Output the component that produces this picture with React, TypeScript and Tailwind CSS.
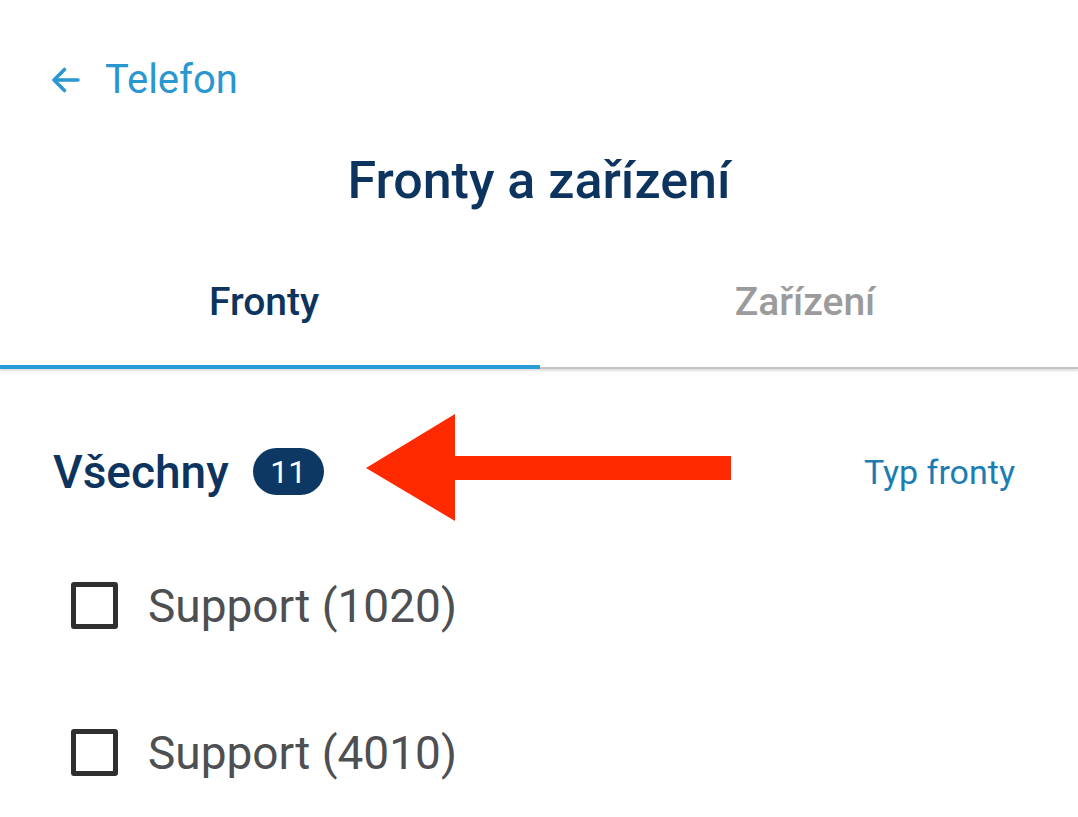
import React from "react";

function Checkbox() {
  return <div className="w-[47px] h-[47px] border-[5px] border-[#2f2f2f] rounded-[3px] shrink-0" />;
}

export default function App() {
  return (
    <div className="w-[1078px] h-[817px] bg-white overflow-hidden relative" style={{ fontFamily: "Roboto, 'Noto Sans', sans-serif" }}>
      {/* back link */}
      <div className="flex items-center h-[60px] mt-[50px] pl-[48px] text-[#2a97d0]">
        <svg width="36" height="36" viewBox="0 0 24 24" fill="none" stroke="currentColor" strokeWidth="2.4" strokeLinecap="round" strokeLinejoin="round">
          <path d="M20 12H4.5" />
          <path d="M11 5l-7 7 7 7" />
        </svg>
        <span className="ml-[21px] text-[40px] leading-none">Telefon</span>
      </div>

      {/* title */}
      <div className="flex justify-center mt-[45px]">
        <h1 className="text-[52px] font-medium text-[#0c345f] leading-none">Fronty a zařízení</h1>
      </div>

      {/* tabs */}
      <div className="mt-[72px] flex shadow-[0_2px_2px_rgba(0,0,0,0.13)]">
        <div className="w-[540px] h-[90px] flex items-start justify-center pt-[4px] border-b-[4px] border-[#2b9bd7]">
          <span className="text-[39px] font-medium text-[#0c345f] leading-none mr-[12px]">Fronty</span>
        </div>
        <div className="flex-1 h-[90px] flex items-start justify-center pt-[4px] border-b-[2px] border-[#c4c4c4]">
          <span className="text-[39px] font-medium text-[#9b9b9b] leading-none mr-[8px]">Zařízení</span>
        </div>
      </div>

      {/* header row */}
      <div className="flex items-center justify-between pl-[53px] pr-[63px] mt-[79px]">
        <div className="flex items-center">
          <span className="text-[46px] font-medium text-[#0c345f] leading-none">Všechny</span>
          <span className="ml-[24px] h-[47px] w-[71px] rounded-full bg-[#0c3863] text-white text-[32px] flex items-center justify-center leading-none">11</span>
        </div>
        <span className="text-[34px] text-[#1b7db3] leading-none">Typ fronty</span>
      </div>

      {/* list */}
      <div className="flex flex-col pl-[71px] mt-[87px] gap-[100px]">
        <div className="flex items-center gap-[30px]">
          <Checkbox />
          <span className="text-[46px] text-[#4d4f52] leading-none">Support (1020)</span>
        </div>
        <div className="flex items-center gap-[30px]">
          <Checkbox />
          <span className="text-[46px] text-[#4d4f52] leading-none">Support (4010)</span>
        </div>
      </div>

      {/* red annotation arrow */}
      <svg className="absolute left-[366px] top-[414px]" width="366" height="107" viewBox="0 0 366 107">
        <polygon points="0,54 89,0 89,42 365,42 365,66 89,66 89,107" fill="#ff2a00" />
      </svg>
    </div>
  );
}
